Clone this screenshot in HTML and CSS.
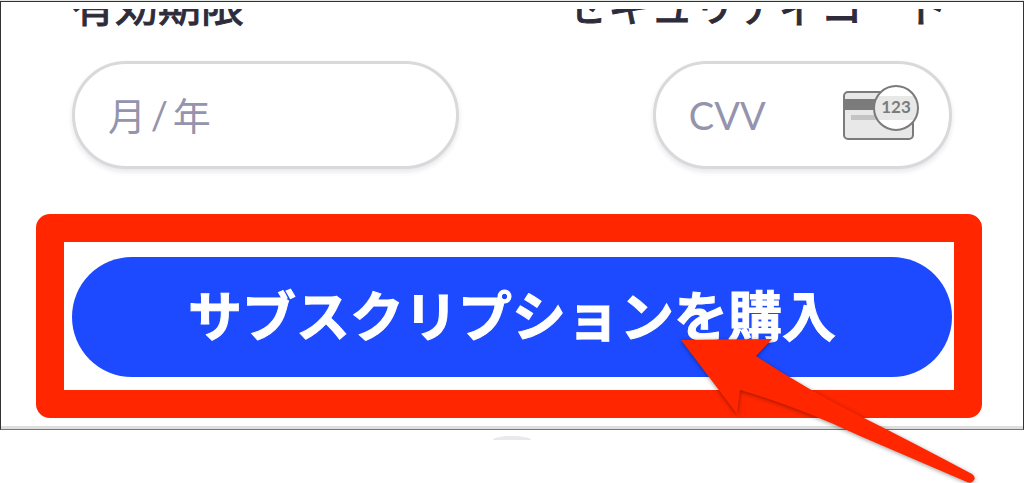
FILE: index.html
```html
<!DOCTYPE html>
<html lang="ja">
<head>
    <meta charset="UTF-8">
    <meta name="viewport" content="width=device-width, initial-scale=1.0">
    <title>サブスクリプションを購入</title>
    <link rel="stylesheet" href="styles.css">
</head>
<body>

<form class="payment-form">
    <div class="field-row">
        <div class="field field-expiry">
            <label for="expiry">有効期限</label>
            <input type="text" id="expiry" placeholder="月&#8201;/&#8201;年">
        </div>
        <div class="field field-cvv">
            <label for="cvv">セキュリティコード</label>
            <div class="input-wrap">
                <input type="text" id="cvv" placeholder="CVV">
                <svg class="cvv-icon" width="80" height="58" viewBox="0 0 80 58" aria-hidden="true">
                    <rect x="2" y="8" width="69" height="47" rx="4" fill="#e8e8e8"/>
                    <rect x="2" y="15" width="69" height="11" fill="#7b7b7b"/>
                    <rect x="9" y="31" width="40" height="5" fill="#c4c4c4"/>
                    <rect x="2" y="8" width="69" height="47" rx="4" fill="none" stroke="#7b7b7b" stroke-width="2"/>
                    <circle cx="54" cy="24" r="22" fill="#fff"/>
                    <path d="M36 12h36a22 22 0 0 1 0 24H36a22 22 0 0 1 0-24z" fill="#e8e8e8"/>
                    <circle cx="54" cy="24" r="22" fill="none" stroke="#7b7b7b" stroke-width="2"/>
                    <text x="54" y="29" text-anchor="middle">123</text>
                </svg>
            </div>
        </div>
    </div>

    <!-- Highlighted button -->
    <div class="highlight">
        <button type="button" class="buy-btn">サブスクリプションを購入</button>
        <svg class="arrow" width="310" height="156" viewBox="0 0 310 156" aria-hidden="true">
            <path d="M11 12L102 11L86 28Q136 61 192 89Q242 114 302 146Q306 149 304 152Q302 156 297 154L190 108Q128 79 70 62L67 86Z" fill="#ff2600"/>
        </svg>
    </div>
</form>

<div class="next-mark"></div>

</body>
</html>
```

FILE: styles.css
```css
* {
    box-sizing: border-box;
}
body {
    min-height: 100vh;
    margin: 0;
    border-top: 1px solid #e4e6e3;
    background-color: #fff;
    font-family: Lato, 'Noto Sans CJK JP', sans-serif;
    overflow: hidden;
}
.payment-form {
    padding-top: 7px;
    border: 1px solid #333;
    border-bottom-color: #777;
    box-shadow: inset 0 -3px 0 #dedede;
}
.field-row {
    display: flex;
    justify-content: space-between;
    margin: 0 71px 45px;
}
.field-expiry {
    width: 44%;
}
.field-cvv {
    width: 34%;
}
/* labels are scrolled half out of view */
.field label {
    display: flex;
    align-items: flex-end;
    height: 20px;
    margin-bottom: 32px;
    overflow: hidden;
    color: #2e2c3a;
    font-size: 43px;
    font-weight: 400;
    line-height: 46px;
    white-space: nowrap;
    -webkit-text-stroke: 1px #2e2c3a;
}
.field-cvv label {
    justify-content: flex-end;
    margin-left: -100px;
    padding-right: 3px;
}
.field input {
    display: block;
    width: 100%;
    height: 108px;
    padding: 0 33px;
    border: 3px solid #d9d9d9;
    border-radius: 54px;
    background-color: #fff;
    box-shadow: 0 3px 5px rgba(60, 60, 110, 0.12);
    font-family: inherit;
    font-size: 38px;
    outline: none;
}
.field input::placeholder {
    color: #9594ad;
    opacity: 1;
}
.input-wrap {
    position: relative;
}
.cvv-icon {
    position: absolute;
    top: 23px;
    right: 30px;
}
.cvv-icon text {
    fill: #7b7b7b;
    font-family: Lato, sans-serif;
    font-size: 17px;
    font-weight: 700;
}
.highlight {
    position: relative;
    margin: 0 41px 11px 35px;
    padding: 15px 2px 13px 8px;
    border: 28px solid #ff2600;
    border-radius: 14px;
}
.buy-btn {
    display: block;
    width: 100%;
    height: 120px;
    padding: 0 0 8px;
    border: none;
    border-radius: 60px;
    background-color: #1d4aff;
    color: #fff;
    font-family: inherit;
    font-size: 54px;
    font-weight: 700;
    white-space: nowrap;
    -webkit-text-stroke: 1px #fff;
    cursor: pointer;
}
.arrow {
    position: absolute;
    top: 86px;
    right: -26px;
    overflow: visible;
    filter: drop-shadow(0 1px 2px rgba(0, 0, 0, 0.4));
    pointer-events: none;
}
.next-mark {
    width: 38px;
    height: 4px;
    margin: 6px auto 0;
    border-radius: 50% 50% 0 0 / 100% 100% 0 0;
    background-color: #e8e8ed;
}
```
